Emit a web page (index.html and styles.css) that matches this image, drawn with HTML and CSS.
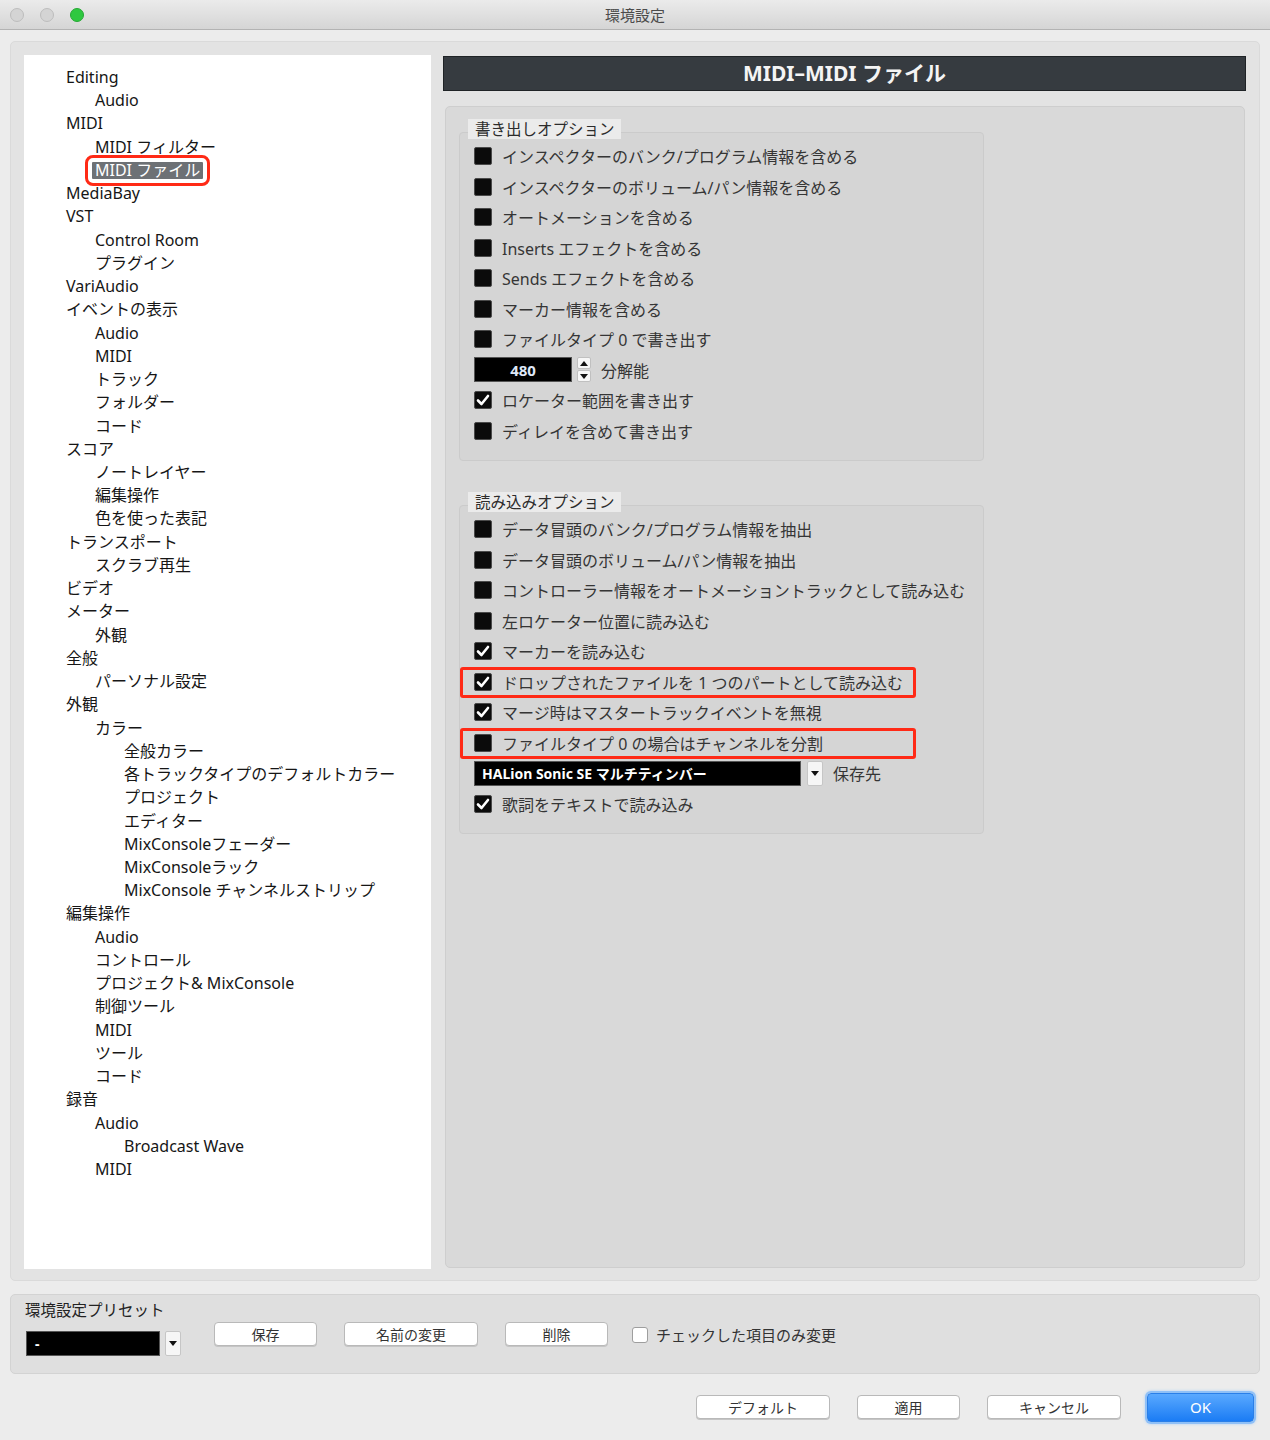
FILE: index.html
```html
<!DOCTYPE html>
<html lang="ja">
<head>
<meta charset="utf-8">
<title>環境設定</title>
<link rel="stylesheet" href="styles.css">
</head>
<body>
<div class="window">
  <div class="titlebar">
    <div class="lights">
      <span class="light gray"></span>
      <span class="light gray"></span>
      <span class="light green"></span>
    </div>
    <div class="title">環境設定</div>
  </div>

  <div class="main">
    <ul class="tree">
      <li class="l0">Editing</li>
      <li class="l1">Audio</li>
      <li class="l0">MIDI</li>
      <li class="l1">MIDI フィルター</li>
      <li class="l1"><span class="sel">MIDI ファイル</span></li>
      <li class="l0">MediaBay</li>
      <li class="l0">VST</li>
      <li class="l1">Control Room</li>
      <li class="l1">プラグイン</li>
      <li class="l0">VariAudio</li>
      <li class="l0">イベントの表示</li>
      <li class="l1">Audio</li>
      <li class="l1">MIDI</li>
      <li class="l1">トラック</li>
      <li class="l1">フォルダー</li>
      <li class="l1">コード</li>
      <li class="l0">スコア</li>
      <li class="l1">ノートレイヤー</li>
      <li class="l1">編集操作</li>
      <li class="l1">色を使った表記</li>
      <li class="l0">トランスポート</li>
      <li class="l1">スクラブ再生</li>
      <li class="l0">ビデオ</li>
      <li class="l0">メーター</li>
      <li class="l1">外観</li>
      <li class="l0">全般</li>
      <li class="l1">パーソナル設定</li>
      <li class="l0">外観</li>
      <li class="l1">カラー</li>
      <li class="l2">全般カラー</li>
      <li class="l2">各トラックタイプのデフォルトカラー</li>
      <li class="l2">プロジェクト</li>
      <li class="l2">エディター</li>
      <li class="l2">MixConsoleフェーダー</li>
      <li class="l2">MixConsoleラック</li>
      <li class="l2">MixConsole チャンネルストリップ</li>
      <li class="l0">編集操作</li>
      <li class="l1">Audio</li>
      <li class="l1">コントロール</li>
      <li class="l1">プロジェクト&amp; MixConsole</li>
      <li class="l1">制御ツール</li>
      <li class="l1">MIDI</li>
      <li class="l1">ツール</li>
      <li class="l1">コード</li>
      <li class="l0">録音</li>
      <li class="l1">Audio</li>
      <li class="l2">Broadcast Wave</li>
      <li class="l1">MIDI</li>
    </ul>

    <div class="right">
      <div class="header">MIDI–MIDI ファイル</div>
      <div class="panel">
        <div class="group">
          <div class="group-label">書き出しオプション</div>
          <div class="group-box">
            <div class="row"><span class="cb"></span><span>インスペクターのバンク/プログラム情報を含める</span></div>
            <div class="row"><span class="cb"></span><span>インスペクターのボリューム/パン情報を含める</span></div>
            <div class="row"><span class="cb"></span><span>オートメーションを含める</span></div>
            <div class="row"><span class="cb"></span><span>Inserts エフェクトを含める</span></div>
            <div class="row"><span class="cb"></span><span>Sends エフェクトを含める</span></div>
            <div class="row"><span class="cb"></span><span>マーカー情報を含める</span></div>
            <div class="row"><span class="cb"></span><span>ファイルタイプ 0 で書き出す</span></div>
            <div class="row">
              <span class="field spin-field">480</span>
              <span class="spin">
                <span class="spin-btn"><svg width="8" height="5" viewBox="0 0 8 5"><path d="M0 5 L4 0 L8 5 Z" fill="#111"/></svg></span>
                <span class="spin-btn"><svg width="8" height="5" viewBox="0 0 8 5"><path d="M0 0 L4 5 L8 0 Z" fill="#111"/></svg></span>
              </span>
              <span class="after-field">分解能</span>
            </div>
            <div class="row"><span class="cb checked"><svg width="18" height="18" viewBox="0 0 18 18"><path d="M4 9.5 L7.5 13 L14 5" fill="none" stroke="#fff" stroke-width="2.6" stroke-linecap="round" stroke-linejoin="round"/></svg></span><span>ロケーター範囲を書き出す</span></div>
            <div class="row"><span class="cb"></span><span>ディレイを含めて書き出す</span></div>
          </div>
        </div>

        <div class="group second">
          <div class="group-label">読み込みオプション</div>
          <div class="group-box">
            <div class="row"><span class="cb"></span><span>データ冒頭のバンク/プログラム情報を抽出</span></div>
            <div class="row"><span class="cb"></span><span>データ冒頭のボリューム/パン情報を抽出</span></div>
            <div class="row"><span class="cb"></span><span>コントローラー情報をオートメーショントラックとして読み込む</span></div>
            <div class="row"><span class="cb"></span><span>左ロケーター位置に読み込む</span></div>
            <div class="row"><span class="cb checked"><svg width="18" height="18" viewBox="0 0 18 18"><path d="M4 9.5 L7.5 13 L14 5" fill="none" stroke="#fff" stroke-width="2.6" stroke-linecap="round" stroke-linejoin="round"/></svg></span><span>マーカーを読み込む</span></div>
            <div class="row marked"><span class="cb checked"><svg width="18" height="18" viewBox="0 0 18 18"><path d="M4 9.5 L7.5 13 L14 5" fill="none" stroke="#fff" stroke-width="2.6" stroke-linecap="round" stroke-linejoin="round"/></svg></span><span>ドロップされたファイルを 1 つのパートとして読み込む</span></div>
            <div class="row"><span class="cb checked"><svg width="18" height="18" viewBox="0 0 18 18"><path d="M4 9.5 L7.5 13 L14 5" fill="none" stroke="#fff" stroke-width="2.6" stroke-linecap="round" stroke-linejoin="round"/></svg></span><span>マージ時はマスタートラックイベントを無視</span></div>
            <div class="row marked"><span class="cb"></span><span>ファイルタイプ 0 の場合はチャンネルを分割</span></div>
            <div class="row">
              <span class="field drop-field">HALion Sonic SE マルチティンバー</span>
              <span class="drop-btn"><svg width="8" height="5" viewBox="0 0 8 5"><path d="M0 0 L4 5 L8 0 Z" fill="#111"/></svg></span>
              <span class="after-field">保存先</span>
            </div>
            <div class="row"><span class="cb checked"><svg width="18" height="18" viewBox="0 0 18 18"><path d="M4 9.5 L7.5 13 L14 5" fill="none" stroke="#fff" stroke-width="2.6" stroke-linecap="round" stroke-linejoin="round"/></svg></span><span>歌詞をテキストで読み込み</span></div>
          </div>
        </div>
      </div>
    </div>
  </div>

  <div class="preset">
    <div class="preset-left">
      <div class="preset-label">環境設定プリセット</div>
      <div class="preset-select">
        <span class="field preset-field">-</span>
        <span class="drop-btn"><svg width="8" height="5" viewBox="0 0 8 5"><path d="M0 0 L4 5 L8 0 Z" fill="#111"/></svg></span>
      </div>
    </div>
    <div class="preset-actions">
      <button class="btn w103">保存</button>
      <button class="btn w134">名前の変更</button>
      <button class="btn w103">削除</button>
      <label class="plain-check"><span class="wbox"></span><span>チェックした項目のみ変更</span></label>
    </div>
  </div>

  <div class="actions">
    <button class="btn w134">デフォルト</button>
    <button class="btn w103">適用</button>
    <button class="btn w134">キャンセル</button>
    <button class="btn ok">OK</button>
  </div>
</div>
</body>
</html>
```

FILE: styles.css
```css
*, *::before, *::after {
  box-sizing: border-box;
}

html, body {
  margin: 0;
  padding: 0;
}

body {
  background: #ececec;
  font-family: "Noto Sans", "Noto Sans CJK JP", sans-serif;
  color: #1e1e1e;
}

.window {
  width: 1270px;
  height: 1440px;
  background: #ececec;
  display: flex;
  flex-direction: column;
}

/* ---------- title bar ---------- */
.titlebar {
  position: relative;
  height: 30px;
  background: linear-gradient(#ebebeb, #d5d5d5);
  border-bottom: 1px solid #b3b3b3;
  display: flex;
  align-items: center;
  justify-content: center;
  flex-shrink: 0;
}

.lights {
  position: absolute;
  left: 10px;
  top: 8px;
  display: flex;
  gap: 16px;
}

.light {
  width: 14px;
  height: 14px;
  border-radius: 50%;
}

.light.gray {
  background: #d4d4d4;
  border: 1px solid #bdbdbd;
}

.light.green {
  background: #2fc840;
  border: 1px solid #26a834;
}

.title {
  font-family: "Noto Sans CJK JP", sans-serif;
  font-size: 15px;
  color: #4b4b4b;
}

/* ---------- main area ---------- */
.main {
  margin: 11px 10px 0 10px;
  height: 1240px;
  background: #e3e3e3;
  border: 1px solid #dadada;
  border-radius: 5px;
  padding: 13px 13px 11px 13px;
  display: flex;
  gap: 12px;
  flex-shrink: 0;
}

.tree {
  list-style: none;
  margin: 0;
  width: 407px;
  background: #fff;
  padding: 11px 0 0 0;
  font-size: 16px;
  color: #161616;
}

.tree li {
  height: 23.24px;
  line-height: 23.24px;
  white-space: nowrap;
}

.tree .l0 { padding-left: 42px; }
.tree .l1 { padding-left: 71px; }
.tree .l2 { padding-left: 100px; }

.sel {
  display: inline-block;
  line-height: 17px;
  height: 17px;
  background: #6d7175;
  color: #fff;
  padding: 0 3px;
  margin-left: -3px;
  border-radius: 1px;
  outline: 3px solid #ff2a16;
  outline-offset: 4px;
}

.right {
  flex: 1;
  display: flex;
  flex-direction: column;
}

.header {
  margin-top: 1px;
  height: 35px;
  background: #363b40;
  border: 1px solid #1f2326;
  color: #f4f4f4;
  font-size: 21px;
  font-weight: 700;
  text-align: center;
  line-height: 33px;
  flex-shrink: 0;
}

.panel {
  flex: 1;
  margin: 15px 1px 1px 2px;
  background: #d9d9d9;
  border: 1px solid #cecece;
  border-radius: 5px;
  padding: 11px 0 0 13px;
}

.group {
  width: 525px;
}

.group.second {
  margin-top: 30px;
}

.group-label {
  position: relative;
  z-index: 1;
  display: inline-block;
  margin-left: 9px;
  height: 20px;
  line-height: 20px;
  padding: 0 6px 0 7px;
  background: #ebebeb;
  font-size: 15.5px;
  color: #2c2c2c;
}

.group-box {
  margin-top: -8px;
  background: #d5d5d5;
  border: 1px solid #cbcbcb;
  border-radius: 4px;
  padding: 8px 0 14px 14px;
}

.row {
  position: relative;
  height: 30.5px;
  display: flex;
  align-items: center;
  gap: 10px;
  font-size: 16px;
  color: #353535;
  white-space: nowrap;
}

.row.marked::after {
  content: "";
  position: absolute;
  left: -14px;
  top: 0;
  width: 456px;
  height: 31px;
  border: 3px solid #ff2a16;
  border-radius: 3px;
}

.cb {
  width: 18px;
  height: 18px;
  background: #0b0b0b;
  border: 1px solid #4a4a4a;
  border-radius: 2px;
  flex-shrink: 0;
  display: flex;
  align-items: center;
  justify-content: center;
  position: relative;
}

.cb svg {
  position: absolute;
  left: -1px;
  top: -1px;
}

.field {
  background: #000;
  border: 1px solid #555;
  height: 25px;
  color: #fff;
  font-weight: 700;
  display: flex;
  align-items: center;
}

.spin-field {
  width: 98px;
  justify-content: center;
  color: #dfe8f8;
  font-size: 15px;
}

.spin {
  display: flex;
  flex-direction: column;
  gap: 1px;
  margin-left: -5px;
}

.spin-btn {
  width: 14px;
  height: 12px;
  background: #f6f6f6;
  border: 1px solid #c0c0c0;
  border-radius: 2px;
  display: flex;
  align-items: center;
  justify-content: center;
}

.after-field {
  margin-left: 0;
}

.drop-field {
  width: 327px;
  padding-left: 7px;
  font-size: 14px;
}

.drop-btn {
  width: 16px;
  height: 25px;
  background: #f6f6f6;
  border: 1px solid #c6c6c6;
  border-radius: 2px;
  display: flex;
  align-items: center;
  justify-content: center;
  margin-left: -4px;
}

/* ---------- preset panel ---------- */
.preset {
  margin: 13px 10px 0 10px;
  height: 80px;
  background: #dfdfdf;
  border: 1px solid #d3d3d3;
  border-radius: 5px;
  padding: 5px 0 0 14px;
  display: flex;
  flex-shrink: 0;
}

.preset-left {
  display: flex;
  flex-direction: column;
}

.preset-label {
  height: 20px;
  line-height: 20px;
  font-size: 15.5px;
  color: #222;
}

.preset-select {
  margin-top: 11px;
  display: flex;
  gap: 5px;
  padding-left: 1px;
}

.preset-select .drop-btn {
  margin-left: 0;
  height: 25px;
}

.preset-field {
  width: 134px;
  padding-left: 8px;
  font-size: 14px;
}

.preset-actions {
  margin-left: 33px;
  padding-top: 22px;
  display: flex;
  align-items: flex-start;
  gap: 27px;
}

.btn {
  height: 24px;
  background: #fff;
  border: 1px solid #b9b9b9;
  border-radius: 4px;
  box-shadow: 0 1px 0 #c5c5c5;
  font-family: "Noto Sans CJK JP", sans-serif;
  font-size: 14px;
  color: #333;
  padding: 0;
  line-height: 22px;
}

.w103 { width: 103px; }
.w134 { width: 134px; }

.plain-check {
  display: flex;
  align-items: center;
  gap: 8px;
  font-size: 15px;
  color: #333;
  margin-top: 2px;
  margin-left: -3px;
}

.wbox {
  width: 16px;
  height: 16px;
  background: #fff;
  border: 1px solid #9e9e9e;
  border-radius: 3px;
}

/* ---------- bottom actions ---------- */
.actions {
  flex: 1;
  display: flex;
  align-items: center;
  justify-content: flex-end;
  gap: 27px;
  padding: 0 16px 0 0;
}

.btn.ok {
  width: 107px;
  height: 29px;
  border: 1px solid #2a7fe8;
  background: linear-gradient(#5aa9ff, #1b7cf4);
  color: #fff;
  font-family: "Noto Sans", sans-serif;
  font-size: 15px;
  box-shadow: 0 0 0 2px #8fc0f7, 0 0 3px 2px #a9cff8;
  margin-left: -1px;
}
```
